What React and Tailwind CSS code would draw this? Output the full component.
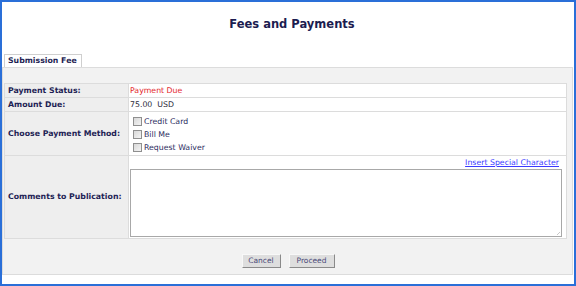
export default function App() {
  const label = "text-[7.8px] font-bold text-[#1f1f55] pl-[3px] flex items-center bg-[#eeeeee] w-[124px] border-r border-[#dcdcdc] shrink-0";
  const btn = "h-[14px] justify-center bg-[#dedede] border border-t-[#f8f8f8] border-l-[#f8f8f8] border-r-[#8a8a8a] border-b-[#8a8a8a] text-[7.5px] leading-[12px] text-[#4a4a78] flex items-center";
  return (
    <div className="w-[576px] h-[286px] border-2 border-[#2a6fd8] bg-white box-border font-['DejaVu_Sans',Verdana,sans-serif] overflow-hidden">
      <div className="h-[52px] pt-[15px] pl-[8px] text-center text-[11.5px] leading-[14px] font-bold text-[#1c1c50]">
        Fees and Payments
      </div>
      <div className="h-[13px] flex">
        <div className="ml-[2px] w-[78px] h-[13px] border border-b-0 border-[#cfcfcf] bg-white text-[7.8px] leading-[12px] font-bold text-[#1f1f55] pl-[3px]">
          Submission Fee
        </div>
      </div>
      <div className="mr-[1px] h-[208px] bg-[#f2f2f2] border border-[#dcdcdc] pt-[15px] pl-[1px] flex flex-col">
        <div className="w-[563px] border border-[#dcdcdc] bg-white flex flex-col">
          <div className="h-[14px] flex border-b border-[#dcdcdc]">
            <div className={label}>Payment Status:</div>
            <div className="flex-1 pl-[1px] text-[7.8px] text-[#e3262b] flex items-center">Payment Due</div>
          </div>
          <div className="h-[14px] flex border-b border-[#dcdcdc]">
            <div className={label}>Amount Due:</div>
            <div className="flex-1 pl-[1px] text-[7.8px] text-[#2a2a3a] flex items-center whitespace-pre">75.00  USD</div>
          </div>
          <div className="h-[44px] flex border-b border-[#dcdcdc]">
            <div className={label}>Choose Payment Method:</div>
            <div className="flex-1 pl-[4px] pt-[5px] flex flex-col gap-[4px]">
              {["Credit Card", "Bill Me", "Request Waiver"].map((t) => (
                <div key={t} className="flex items-center h-[9px] gap-[2px]">
                  <span className="w-[9px] h-[9px] border border-[#8f8f8f] bg-gradient-to-br from-[#d8d8d8] to-[#f4f4f4] shrink-0"></span>
                  <span className="text-[7.8px] text-[#2b2b60] leading-[9px]">{t}</span>
                </div>
              ))}
            </div>
          </div>
          <div className="h-[82px] flex">
            <div className={label}>Comments to Publication:</div>
            <div className="flex-1 flex flex-col pl-[1px] pr-[4px]">
              <div className="h-[12px] text-right pr-[3px] pt-[2px] text-[7.8px] leading-[10px]">
                <span className="text-[#3a3aff] underline">Insert Special Character</span>
              </div>
              <div className="mt-[1px] h-[68px] border border-[#a8a8a8] bg-white relative">
                <div className="absolute right-[1px] bottom-[1px] w-[6px] h-[6px] bg-[linear-gradient(135deg,transparent_50%,#c8c8c8_50%,#c8c8c8_58%,transparent_58%,transparent_72%,#c8c8c8_72%,#c8c8c8_80%,transparent_80%)]"></div>
              </div>
            </div>
          </div>
        </div>
        <div className="mt-[15px] flex justify-center gap-[8px]">
          <div className={btn + " w-[39px]"}>Cancel</div>
          <div className={btn + " w-[46px]"}>Proceed</div>
        </div>
      </div>
    </div>
  );
}
